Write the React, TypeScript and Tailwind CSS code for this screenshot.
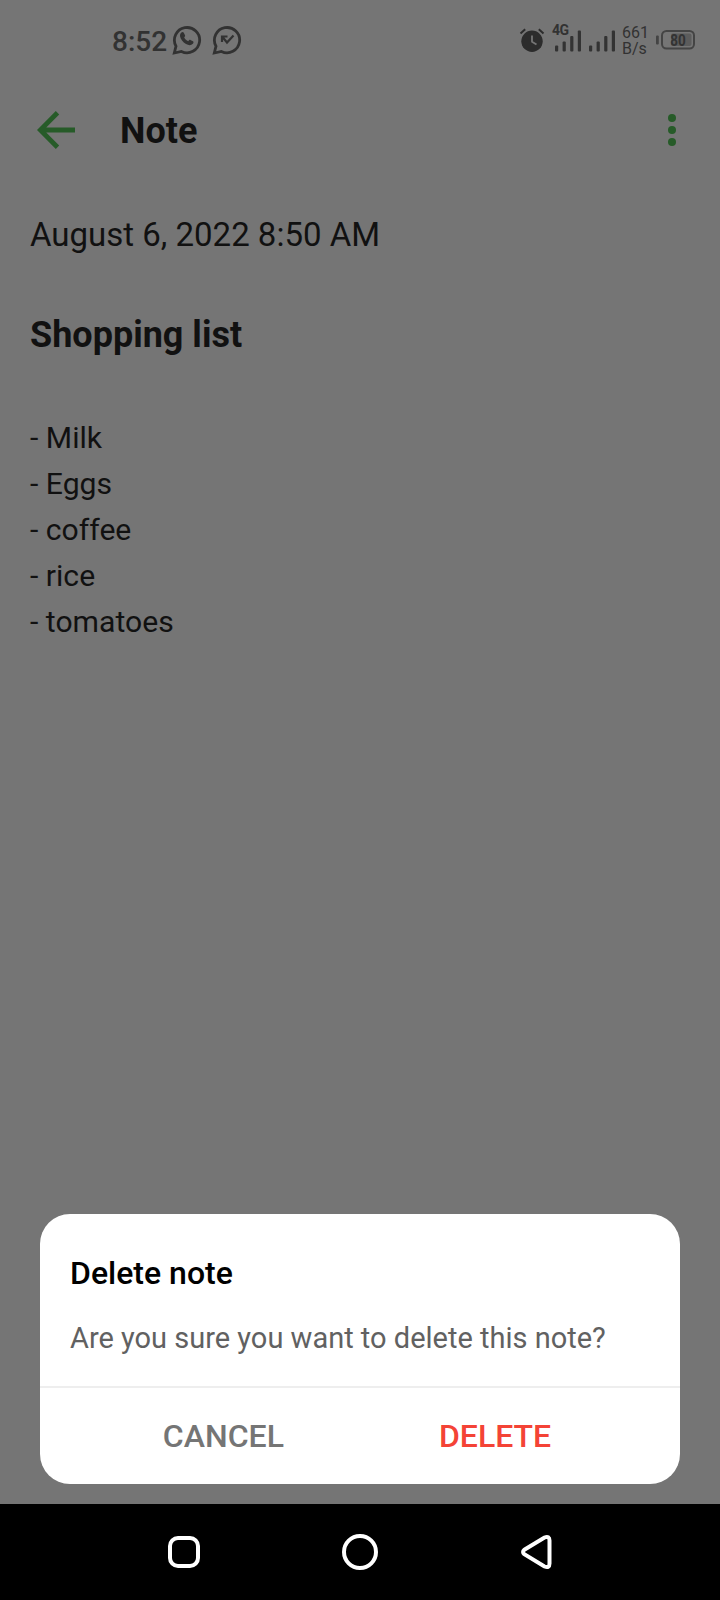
import React from "react";

const items = ["Milk", "Eggs", "coffee", "rice", "tomatoes"];

function ChatBubble({ children }: { children: React.ReactNode }) {
  return (
    <svg width="30" height="32" viewBox="0 0 30 32" fill="none" stroke="#323232" strokeWidth="2.8">
      <path d="M2.3 29 4 22.2A12.6 12.6 0 1 1 9.4 27.4Z" strokeLinejoin="miter" />
      {children}
    </svg>
  );
}

function SignalBars() {
  return (
    <svg width="27" height="22" viewBox="0 0 27 22" fill="#333">
      <rect x="0" y="15.5" width="3.200" height="6" rx="1" />
      <rect x="7.600" y="11.500" width="3.200" height="10" rx="1" />
      <rect x="15.200" y="6" width="3.200" height="15.500" rx="1" />
      <rect x="22.800" y="0.500" width="3.200" height="21" rx="1" />
    </svg>
  );
}

function StatusBar() {
  return (
    <div className="flex h-20 shrink-0 items-center text-[#323232]">
      <span className="ml-[112px] mt-[3px] w-[60px] whitespace-nowrap text-[28px] font-medium leading-8">8:52</span>
      <div className="-mt-px">
        <ChatBubble>
          <path
            d="M9.400 8.600c.8-.9 1.900-.8 2.400.2l1.200 2.500c.3.7 0 1.200-.8 2.100 1 1.800 2.200 2.900 4.100 3.800.9-1.200 1.400-1.600 2.100-1.300l2.600 1.300c.8.5.6 1.700-.2 2.600-1.600 1.900-4.200 1.700-6.800.2-3.200-1.800-5.400-4.600-5.900-7.400-.3-1.600.2-3 1.300-4Z"
            fill="#323232"
            stroke="none"
          />
        </ChatBubble>
      </div>
      <div className="ml-2.5">
        <ChatBubble>
          <path d="M10 18V12.500H15.500M10.500 13 15 18.500 21.500 11.500" strokeWidth="2.200" />
        </ChatBubble>
      </div>
      <svg className="ml-[277px]" width="26" height="26" viewBox="0 0 26 26" fill="none">
        <circle cx="13" cy="14.300" r="10.700" fill="#2c2c2c" />
        <path d="M1.500 6.500 6.200 2.200M24.500 6.500 19.800 2.200" stroke="#2c2c2c" strokeWidth="2" />
        <path d="M13 8.500V14.800L17.500 17.500" stroke="#757575" strokeWidth="1.800" />
      </svg>
      <div className="relative ml-[10px] mt-0.5">
        <SignalBars />
        <span className="absolute -left-[3px] -top-2 font-['Roboto'] text-[14px] font-bold leading-[16px] tracking-[-0.5px]">4G</span>
      </div>
      <div className="ml-[7px] mt-0.5">
        <SignalBars />
      </div>
      <div className="ml-[6px] mt-px flex w-[34px] flex-col text-[16px] leading-4">
        <span>661</span>
        <span>B/s</span>
      </div>
      <svg width="40" height="22" viewBox="0 0 40 22" fill="none">
        <rect x="0" y="6.500" width="2.800" height="9" rx="1" fill="#444" />
        <rect x="6" y="2" width="32" height="17.500" rx="4.500" stroke="#444" strokeWidth="2" />
        <rect x="15" y="4.500" width="20.500" height="12.500" rx="2" fill="#5c5c5c" />
        <text x="14.200" y="16.500" fontFamily="Roboto" fontWeight="700" fontSize="16" textLength="15.500" lengthAdjust="spacingAndGlyphs" fill="#333">80</text>
      </svg>
    </div>
  );
}

export default function App() {
  return (
    <div className="relative flex h-[1600px] w-[720px] flex-col overflow-hidden bg-[#757575] font-['Roboto',sans-serif] text-[#111]">
      <StatusBar />
      <header className="flex h-[100px] shrink-0 items-center pl-[37px] pr-10">
        <svg width="38" height="38" viewBox="0 0 38 38" fill="none" stroke="#265b28" strokeWidth="4.800">
          <path d="M38 19H4M20.500 1.800 3.300 19 20.500 36.200" />
        </svg>
        <h1 className="ml-[45px] mt-0.5 grow text-[36px] font-bold leading-[42px]">Note</h1>
        <svg width="16" height="34" viewBox="0 0 16 34" fill="#265b28">
          <circle cx="8" cy="5" r="4" />
          <circle cx="8" cy="17" r="4" />
          <circle cx="8" cy="29" r="4" />
        </svg>
      </header>
      <main className="grow px-[30px] pt-[35px]">
        <p className="text-[33px] leading-10">August 6, 2022 8:50 AM</p>
        <h2 className="mt-[59px] text-[36px] font-bold leading-[42px]">Shopping list</h2>
        <ul className="mt-[59px] text-[30.150px] leading-[46px]">
          {items.map((item) => (
            <li key={item}>- {item}</li>
          ))}
        </ul>
      </main>
      <nav className="flex h-24 shrink-0 items-center bg-black pl-[168px]">
        <svg width="32" height="32" viewBox="0 0 32 32" fill="none" stroke="#fff" strokeWidth="4">
          <rect x="2" y="2" width="28" height="28" rx="8" />
        </svg>
        <svg className="ml-[142px]" width="36" height="36" viewBox="0 0 36 36" fill="none" stroke="#fff" strokeWidth="4">
          <circle cx="18" cy="18" r="16" />
        </svg>
        <svg className="ml-[142px]" width="34" height="36" viewBox="0 0 34 36" fill="none" stroke="#fff" strokeWidth="4">
          <path d="M4.300 15.800 24.500 3.500Q29.500 1.500 29.500 6.500V29.500Q29.500 34.500 24.500 32.500L4.300 20.200Q1.800 18 4.300 15.800Z" />
        </svg>
      </nav>
      <section role="dialog" className="absolute bottom-[116px] left-10 flex h-[270px] w-[640px] flex-col rounded-[30px] bg-white">
        <div className="flex h-[172px] flex-col px-[30px] pt-[39px]">
          <h3 className="text-[32px] font-medium leading-10 text-black">Delete note</h3>
          <p className="mt-[25px] whitespace-nowrap text-[29px] leading-10 text-[#616161]">Are you sure you want to delete this note?</p>
        </div>
        <div className="flex grow items-center justify-center gap-[155px] border-t-2 border-[#eee] pr-1.5 text-[32px] font-medium">
          <button className="text-[#757575]">CANCEL</button>
          <button className="text-[#f44336]">DELETE</button>
        </div>
      </section>
    </div>
  );
}
